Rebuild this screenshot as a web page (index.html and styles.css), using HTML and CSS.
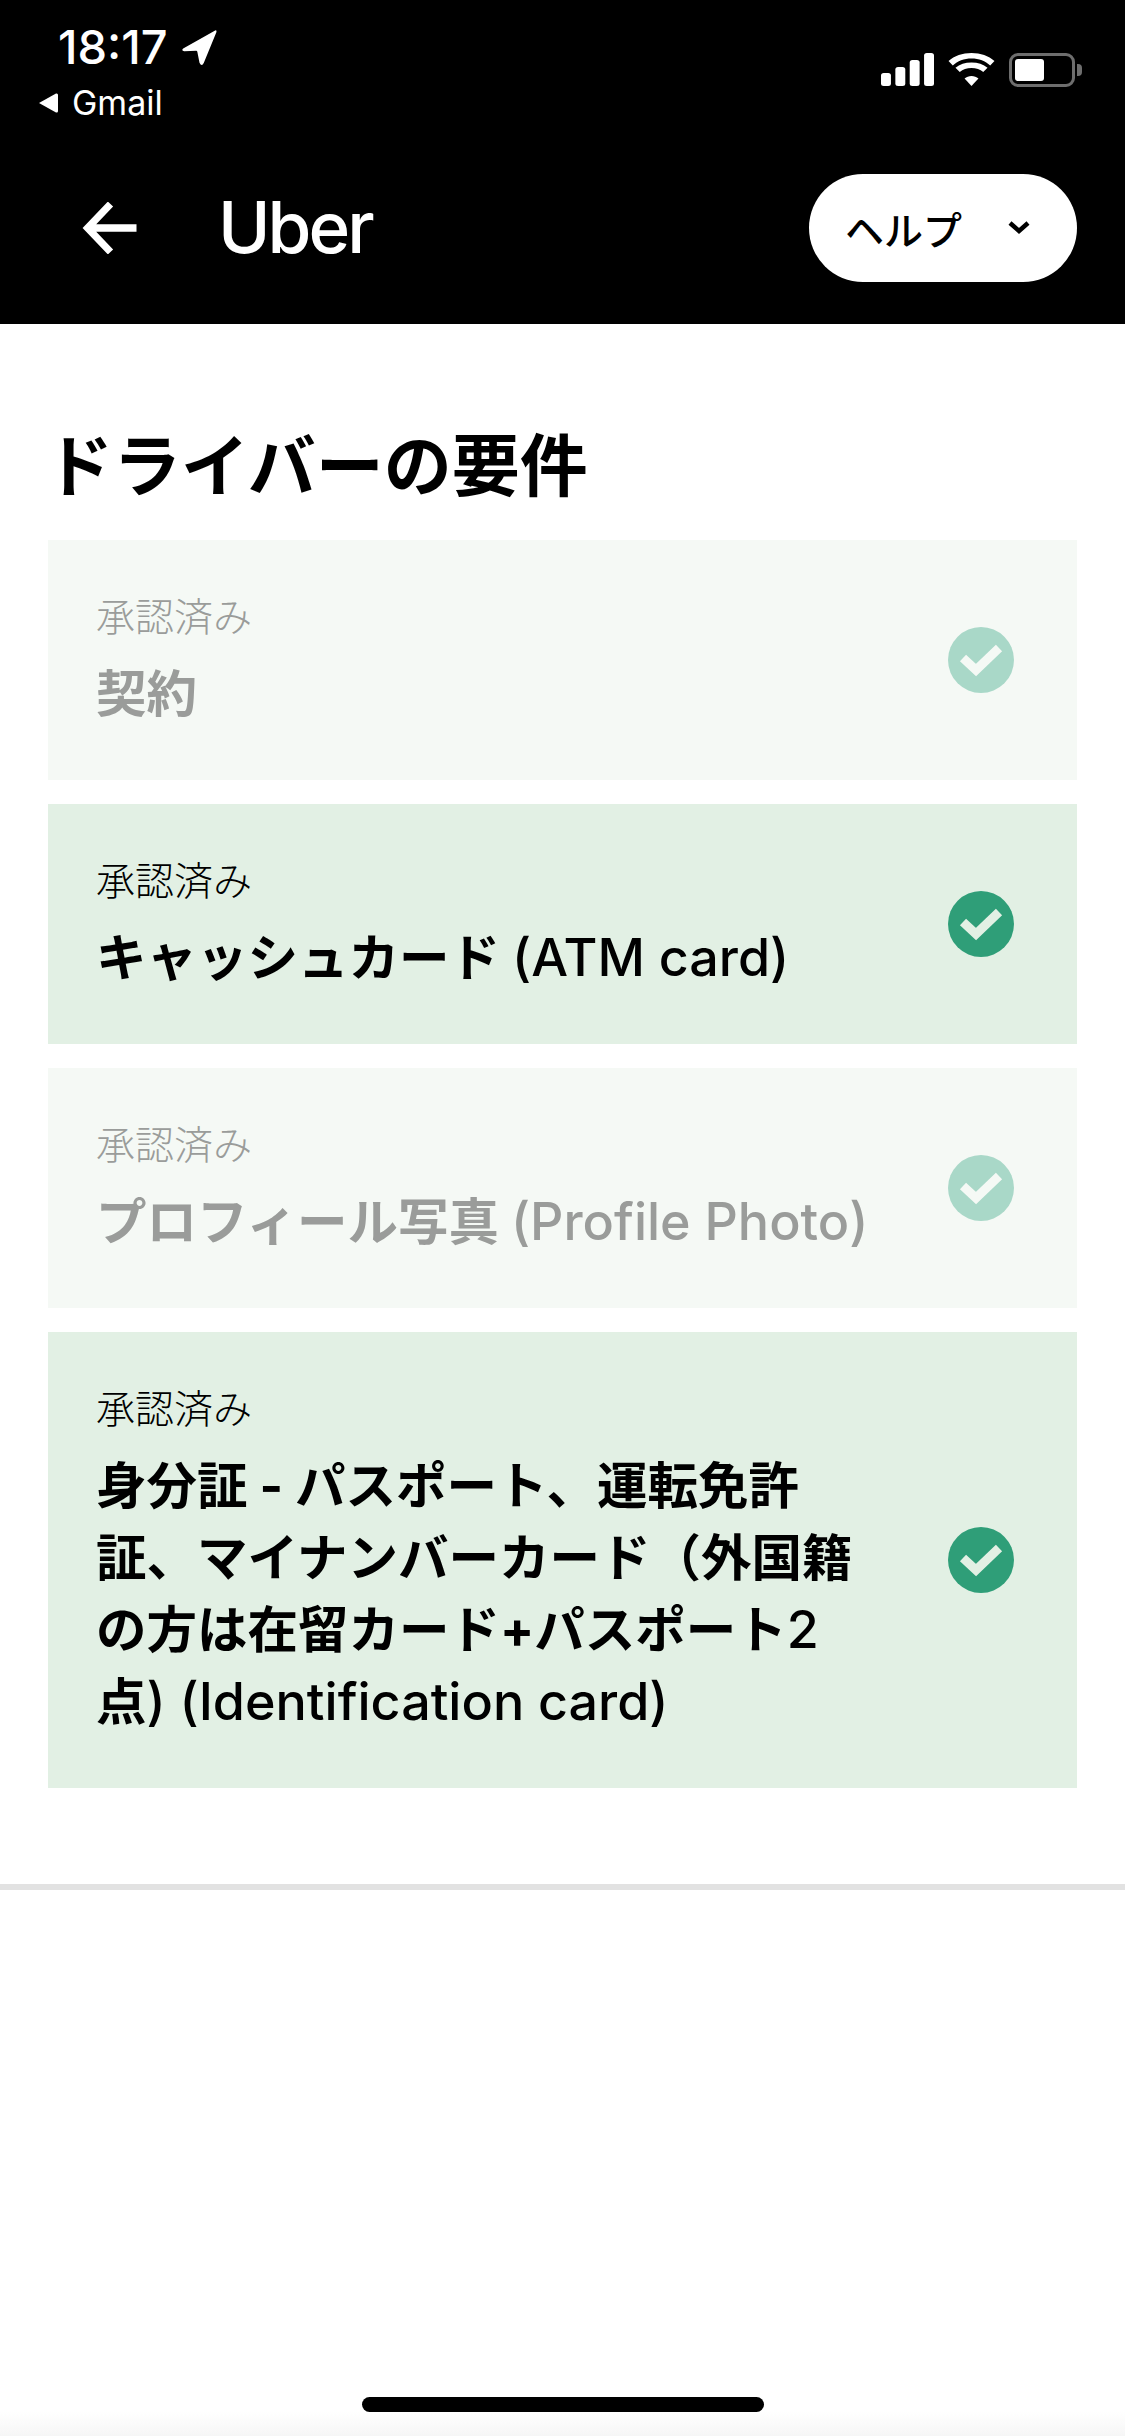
FILE: index.html
```html
<!doctype html>
<html lang="ja">
  <head>
    <meta charset="UTF-8" />
    <meta name="viewport" content="width=device-width, initial-scale=1.0" />
    <title>ドライバーの要件</title>
    <link rel="stylesheet" href="styles.css">
  </head>
  <body>
    <div class="top">
      <div class="status">
        <div class="status-left">
          <div class="clock">
            <span>18:17</span>
            <svg class="loc-icon" viewBox="0 0 32 34"><path d="M1 18 L30 1.500 Q32 .5 31.500 3 L20 31 Q18 35 16 31 L14 21 Q13.800 20 13 20 L2 20.500 Q-1 20 1 18 Z"/></svg>
          </div>
          <div class="back-app">
            <svg class="back-tri" viewBox="0 0 20 22"><path d="M1 11 L18 1.500 Q20 1 20 3 L20 19 Q20 21 18 20.500 Z"/></svg>
            <span>Gmail</span>
          </div>
        </div>
        <div class="status-right">
          <svg class="signal" viewBox="0 0 48 33" preserveAspectRatio="none"><rect x="0" y="20" width="9" height="13" rx="2.500"/><rect x="13" y="14" width="9" height="19" rx="2.500"/><rect x="26" y="7" width="9" height="26" rx="2.500"/><rect x="39" y="0" width="9" height="33" rx="2.500"/></svg>
          <svg class="wifi" viewBox="0 0 44 33" preserveAspectRatio="none"><path d="M22 5.500 C29 5.500 35 8 39.500 12.500 L43.500 8 C38 2.800 30.500 0 22 0 C13.500 0 6 2.800 .5 8 L4.500 12.500 C9 8 15 5.500 22 5.500 Z"/><path d="M22 15 C26.500 15 30 16.500 33 19 L37 14.700 C33 11.300 28 9.500 22 9.500 C16 9.500 11 11.300 7 14.700 L11 19 C14 16.500 17.500 15 22 15 Z"/><path d="M22 33 L28.500 25.500 C26.700 24 24.500 23 22 23 C19.500 23 17.300 24 15.500 25.500 Z"/></svg>
          <div class="battery">
            <div class="battery-body"><div class="battery-level"></div></div>
            <div class="battery-cap"></div>
          </div>
        </div>
      </div>
      <div class="nav">
        <div class="nav-left">
          <svg class="back-arrow" viewBox="0 0 54 50"><path d="M52 25 H5 M27 2 L5 25 L27 48" fill="none" stroke="#fff" stroke-width="7"/></svg>
          <span class="logo">Uber</span>
        </div>
        <button class="help-btn">
          <span>ヘルプ</span>
          <svg class="chev" viewBox="0 0 22 16"><path d="M2 3 L11 11 L20 3" fill="none" stroke="#000" stroke-width="4.500"/></svg>
        </button>
      </div>
    </div>

    <div class="content">
      <h1>ドライバーの要件</h1>
      <div class="req-list">
        <div class="req-item faded">
          <div class="req-text">
            <div class="req-status">承認済み</div>
            <div class="req-title">契約</div>
          </div>
          <svg class="check" viewBox="0 0 66 66"><circle cx="33" cy="33" r="33"/><path d="M15 31 L28 43 L51 21" fill="none" stroke-width="9"/></svg>
        </div>
        <div class="req-item">
          <div class="req-text">
            <div class="req-status">承認済み</div>
            <div class="req-title">キャッシュカード <span class="latin">(ATM card)</span></div>
          </div>
          <svg class="check" viewBox="0 0 66 66"><circle cx="33" cy="33" r="33"/><path d="M15 31 L28 43 L51 21" fill="none" stroke-width="9"/></svg>
        </div>
        <div class="req-item faded">
          <div class="req-text">
            <div class="req-status">承認済み</div>
            <div class="req-title">プロフィール写真 <span class="latin">(Profile Photo)</span></div>
          </div>
          <svg class="check" viewBox="0 0 66 66"><circle cx="33" cy="33" r="33"/><path d="M15 31 L28 43 L51 21" fill="none" stroke-width="9"/></svg>
        </div>
        <div class="req-item">
          <div class="req-text">
            <div class="req-status">承認済み</div>
            <div class="req-title">身分証 - パスポート、運転免許<br>証、マイナンバーカード（外国籍<br>の方は在留カード+パスポート<span class="latin">2</span><br>点<span class="latin">) (Identification card)</span></div>
          </div>
          <svg class="check" viewBox="0 0 66 66"><circle cx="33" cy="33" r="33"/><path d="M15 31 L28 43 L51 21" fill="none" stroke-width="9"/></svg>
        </div>
      </div>
    </div>
    <div class="divider"></div>
    <div class="home-bar"></div>
  </body>
</html>
```

FILE: styles.css
```css
* {
  box-sizing: border-box;
}

body {
  margin: 0;
  height: 2436px;
  position: relative;
  overflow: hidden;
  background: linear-gradient(#fff 2412px, #f6f6f6 2436px);
  color: #000;
  font-family: Inter, Roboto, "Noto Sans CJK JP", sans-serif;
}

.top {
  background-color: #000;
  color: #fff;
  height: 324px;
}

.status {
  display: flex;
  justify-content: space-between;
  height: 120px;
  padding: 23px 43px 0 38px;
}

.clock {
  display: flex;
  align-items: center;
  gap: 14px;
  margin-left: 20px;
  font-size: 47px;
  line-height: 48px;
  font-weight: 500;
}

.loc-icon {
  width: 35px;
  height: 37px;
  fill: #fff;
}

.back-app {
  display: flex;
  align-items: center;
  gap: 14px;
  margin-top: 12px;
  font-size: 34px;
  line-height: 40px;
}

.back-tri {
  width: 20px;
  height: 22px;
  fill: #fff;
}

.status-right {
  display: flex;
  align-items: flex-start;
  gap: 14px;
  padding-top: 30px;
}

.signal {
  width: 53px;
  height: 33px;
  fill: #fff;
}

.wifi {
  width: 47px;
  height: 33px;
  fill: #fff;
}

.battery {
  display: flex;
  align-items: center;
  gap: 2px;
}

.battery-body {
  width: 66px;
  height: 34px;
  border: 3px solid #6e6e6e;
  border-radius: 9px;
  padding: 3px;
}

.battery-level {
  width: 29px;
  height: 100%;
  background-color: #fff;
  border-radius: 3px;
}

.battery-cap {
  width: 5px;
  height: 12px;
  background-color: #6e6e6e;
  border-radius: 0 4px 4px 0;
}

.nav {
  display: flex;
  justify-content: space-between;
  align-items: center;
  padding: 54px 48px 0 82px;
}

.nav-left {
  display: flex;
  align-items: center;
  gap: 79px;
}

.back-arrow {
  width: 57px;
  height: 52px;
}

.logo {
  font-size: 71px;
  line-height: 70px;
  letter-spacing: -3px;
  font-weight: 500;
  position: relative;
  top: -1px;
}

.help-btn {
  display: flex;
  align-items: center;
  justify-content: space-between;
  width: 268px;
  height: 108px;
  padding: 0 47px 0 36px;
  border: none;
  border-radius: 54px;
  background-color: #fff;
  color: #000;
  font-family: inherit;
  font-size: 39px;
  font-weight: 500;
}

.chev {
  width: 22px;
  height: 16px;
}

.content {
  padding: 100px 48px 0;
}

h1 {
  margin: 0 0 32px -3px;
  font-size: 68px;
  line-height: 84px;
  font-weight: 700;
}

.req-list {
  display: flex;
  flex-direction: column;
  gap: 24px;
}

.req-item {
  display: flex;
  justify-content: space-between;
  align-items: center;
  padding: 50px 63px 50px 48px;
  background-color: #e2f0e4;
}

.req-status {
  font-size: 39px;
  line-height: 54px;
  font-weight: 300;
}

.req-title {
  margin-top: 14px;
  font-size: 50.5px;
  line-height: 72px;
  font-weight: 700;
}

.latin {
  font-size: 52px;
  font-weight: 500;
}

.check {
  flex: none;
  width: 66px;
  height: 66px;
  fill: #2f9e78;
  stroke: #e2f0e4;
}

.check circle {
  stroke: none;
}

.faded {
  background-color: #f5f9f5;
}

.faded .req-status,
.faded .req-title {
  color: #9a9c9a;
}

.faded .check {
  fill: #a9d8c8;
  stroke: #f5f9f5;
}

.divider {
  height: 6px;
  margin-top: 96px;
  background-color: #e2e2e2;
}

.home-bar {
  position: absolute;
  left: 362px;
  bottom: 24px;
  width: 402px;
  height: 15px;
  border-radius: 8px;
  background-color: #000;
}
```
